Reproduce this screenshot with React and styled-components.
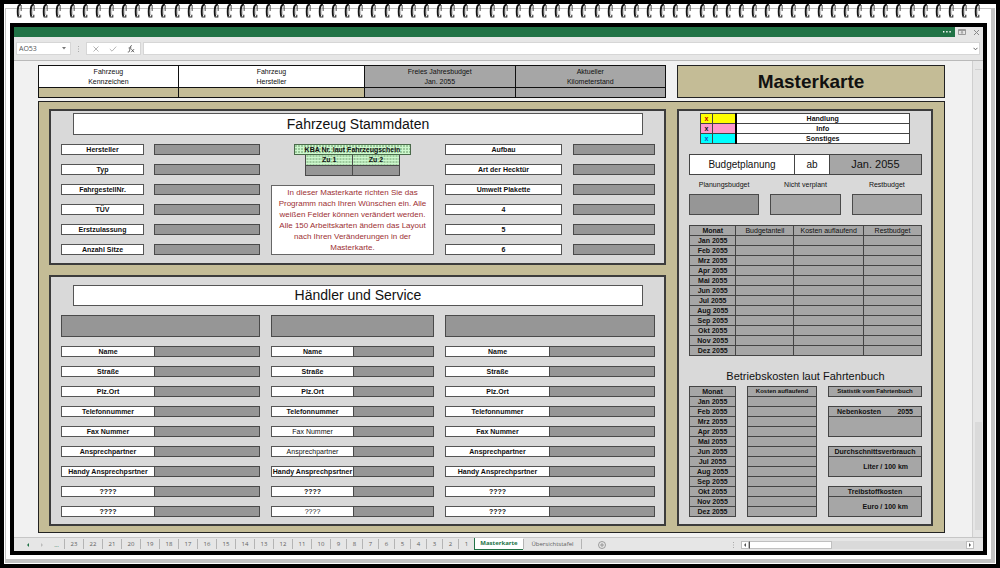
import React from "react";
import styled, { createGlobalStyle, css } from "styled-components";

const color = {
  sand: "#c4bc96",
  panel: "#d9d9d9",
  dark: "#969696",
  mid: "#a6a6a6",
  line: "#4a4a4a",
  green: "#217346",
  chrome: "#e6e6e6",
};

const GlobalStyle = createGlobalStyle`
  *, *::before, *::after { box-sizing: border-box; }
  body {
    margin: 0;
    background: #000;
    color: #111;
    font: 7px/9px "Liberation Sans", Arial, sans-serif;
  }
  button, input, select { font: inherit; color: inherit; margin: 0; border-radius: 0; }
  table { border-collapse: collapse; border-spacing: 0; table-layout: fixed; width: 100%; }
  h1, h2, h3, p { margin: 0; font-size: inherit; font-weight: normal; }
`;

/* ---------- spiral notebook ---------- */

const Paper = styled.div`
  margin: 4px;
  padding: 4px 1px 1px;
  background: #fff;
`;

const PaperEdge = styled.div`
  border: solid #c3c3c3;
  border-width: 1px 4px 4px 1px;
`;

const Spiral = styled.div`
  display: flex;
  justify-content: space-between;
  position: relative;
  height: 14px;
  margin-top: -5px;
  padding: 0 10px;
`;

const RingSvg = styled.svg`
  flex: none;
  width: 6px;
  height: 14px;
`;

const Ring = () => (
  <RingSvg viewBox="0 0 6 14" aria-hidden="true">
    <path d="M4.8 1C2.6 .4 2 2.6 1.8 5.5C1.6 9 1.6 11.2 2.4 12.6" fill="none" stroke="#151515" strokeWidth="1.9" />
    <path d="M4.6 2.8C3.7 3 3.5 6 3.6 11" fill="none" stroke="#b5b5b5" strokeWidth=".8" />
    <path d="M5.2 1V7" fill="none" stroke="#444" strokeWidth=".9" />
    <path d="M1.6 13H4.8V10.8" fill="none" stroke="#333" strokeWidth="1.1" />
  </RingSvg>
);

const Frame = styled.div`
  margin: 5px 4px 4px;
  border: 4px solid #000;
  background: ${color.chrome};
`;

/* ---------- spreadsheet window ---------- */

const TitleBar = styled.header`
  display: flex;
  height: 10px;
`;

const TitleFill = styled.div`
  flex: 1;
  display: flex;
  justify-content: flex-end;
  padding-right: 3px;
  background: ${color.green};
`;

const IconButton = styled.button`
  display: flex;
  align-items: center;
  justify-content: center;
  width: ${(p) => p.$w || 14}px;
  padding: 0;
  border: 0;
  background: none;
  color: ${(p) => p.$tone || "#888"};
`;

const FormulaBar = styled.div`
  display: flex;
  align-items: center;
  height: 24px;
  padding: 0 3px 0 2px;
  border-bottom: 1px solid #b9b9b9;
`;

const NameBox = styled.div`
  display: flex;
  align-items: center;
  width: 55px;
  height: 13px;
  padding-right: 4px;
  border: 1px solid #d6d6d6;
  background: #fff;
`;

const NameSelect = styled.select`
  flex: 1;
  min-width: 0;
  height: 11px;
  padding: 0 2px;
  border: 0;
  appearance: none;
  background: transparent;
  color: #555;
  font-family: "Open Sans", "Noto Sans", sans-serif;
`;

const Grip = styled.svg`
  width: 15px;
  height: 8px;
`;

const FormulaTools = styled.div`
  display: flex;
  justify-content: space-around;
  width: 55px;
  height: 13px;
  margin-right: 2px;
  border: 1px solid #d6d6d6;
  background: #fff;
`;

const FormulaField = styled.div`
  flex: 1;
  display: flex;
  height: 13px;
  border: 1px solid #d6d6d6;
  background: #fff;
`;

const FormulaInput = styled.input`
  flex: 1;
  min-width: 0;
  padding: 0 4px;
  border: 0;
  background: transparent;
`;

const Workspace = styled.div`
  display: flex;
`;

const Sheet = styled.main`
  flex: 1;
  min-width: 0;
  padding: 4px 27px 4px 24px;
  background: #f1f1f1;
`;

const VerticalScroll = styled.div`
  display: flex;
  flex-direction: column;
  justify-content: space-between;
  width: 11px;
  padding: 8px 1px 7px 2px;
  border-left: 1px solid #cfcfcf;
`;

const ScrollTop = styled.div`
  height: 1px;
  background: #d2d2d2;
`;

const ScrollThumb = styled.div`
  height: 108px;
  background: #dadada;
`;

/* ---------- card header ---------- */

const HeaderRow = styled.div`
  display: grid;
  grid-template-columns: minmax(0, 628fr) minmax(0, 268fr);
  gap: 11px;
  margin-bottom: 3px;
`;

const Col = styled.col`
  width: ${(p) => p.$w};
`;

const InfoTable = styled.table`
  text-align: center;
  th, td {
    padding: 0;
    border: 1px solid #111;
  }
  th {
    height: 21px;
    padding-top: 1px;
    font-weight: normal;
    line-height: 10px;
    background: ${color.mid};
  }
  td { height: 10px; background: ${color.mid}; }
  th:nth-child(-n + 2) { background: #fff; }
  td:nth-child(-n + 2) { background: ${color.sand}; }
`;

const CardTitle = styled.h1`
  display: flex;
  align-items: center;
  justify-content: center;
  border: 1px solid #222;
  background: ${color.sand};
  font-size: 19px;
  line-height: 22px;
  font-weight: bold;
`;

/* ---------- board and panels ---------- */

const Board = styled.div`
  display: grid;
  grid-template-columns: minmax(0, 617fr) minmax(0, 256fr);
  gap: 11px;
  padding: 7px 11px 6px 10px;
  border: 1px solid #222;
  background: ${color.sand};
`;

const BoardColumn = styled.div`
  display: flex;
  flex-direction: column;
  gap: 10px;
`;

const Panel = styled.section`
  padding: ${(p) => p.$top || 2}px 9px ${(p) => p.$bottom || 7}px 10px;
  border: 2px solid #3c3c3c;
  background: ${color.panel};
`;

const PanelTitle = styled.h2`
  margin: 0 12px 9px;
  border: 1px solid #555;
  background: #fff;
  font-size: 14px;
  line-height: ${(p) => p.$line || 20}px;
  text-align: center;
`;

const ThreeColumns = styled.div`
  display: grid;
  grid-template-columns: minmax(0, 199fr) minmax(0, 163fr) minmax(0, 210fr);
  gap: 11px;
`;

const FieldList = styled.div`
  display: flex;
  flex-direction: column;
  gap: 9px;
`;

const FieldRow = styled.div`
  display: grid;
  grid-template-columns: minmax(0, ${(p) => p.$cols[0]}fr) minmax(0, ${(p) => p.$cols[1]}fr);
  gap: ${(p) => p.$gap}px;
`;

const FieldLabel = styled.label`
  height: 11px;
  border: 1px solid #555;
  ${(p) => p.$joined && css`border-right: 0;`}
  background: #fff;
  font-weight: ${(p) => (p.$plain ? "normal" : "bold")};
  text-align: center;
  white-space: nowrap;
`;

const FieldInput = styled.input`
  width: 100%;
  height: ${(p) => p.$h || 11}px;
  padding: 0 3px;
  border: 1px solid ${color.line};
  background: ${(p) => (p.$light ? color.mid : color.dark)};
`;

const Field = ({ id, label, cols, gap = 0, plain }) => (
  <FieldRow $cols={cols} $gap={gap}>
    <FieldLabel htmlFor={id} $joined={gap === 0} $plain={plain}>{label}</FieldLabel>
    <FieldInput id={id} />
  </FieldRow>
);

const CenterColumn = styled.div`
  display: flex;
  flex-direction: column;
  align-items: center;
`;

const dotted = css`
  background-color: #cdf8cd;
  background-image: radial-gradient(circle at 1px 1px, #9cc99c 1px, transparent 1px);
  background-size: 3px 3px;
`;

const KbaTitle = styled.h3`
  width: 72%;
  border: 1px solid #4a6a4a;
  ${dotted}
  font-weight: bold;
  text-align: center;
  white-space: nowrap;
`;

const KbaTable = styled.table`
  width: 58%;
  margin-bottom: 9px;
  th, td {
    height: 10px;
    padding: 0;
    border: 1px solid #4a4a4a;
    line-height: 9px;
  }
  th { ${dotted} border-top: 0; }
  td { background: ${color.dark}; }
`;

const Notice = styled.p`
  flex: 1;
  align-self: stretch;
  display: flex;
  align-items: center;
  justify-content: center;
  border: 1px solid #666;
  background: #fff;
  color: #9c3034;
  font-size: 8px;
  line-height: 11px;
  text-align: center;
  white-space: nowrap;
`;

/* ---------- budget panel ---------- */

const Legend = styled.table`
  width: auto;
  margin: 0 11px 10px;
  min-width: calc(100% - 23px);
  th, td {
    height: 10px;
    padding: 0;
    border: 1px solid #444;
    line-height: 9px;
    font-weight: bold;
    text-align: center;
  }
  td:last-child { border-left: 2px solid #000; background: #fff; }
`;

const Swatch = styled.td`
  background: ${(p) => p.$fill};
  color: ${(p) => p.$ink};
`;

const PlanRow = styled.div`
  display: grid;
  grid-template-columns: minmax(0, 105fr) minmax(0, 35fr) minmax(0, 93fr);
  border: 1px solid #444;
  background: #fff;
  font-size: 10px;
  line-height: 19px;
  text-align: center;
`;

const PlanCell = styled.div`
  & + & { border-left: 1px solid #444; }
  ${(p) => p.$month && css`background: ${color.mid}; font-size: 11px;`}
`;

const BudgetBoxes = styled.div`
  display: grid;
  grid-template-columns: repeat(3, minmax(0, 1fr));
  gap: 11px;
  margin-bottom: 10px;
  text-align: center;
`;

const BoxLabel = styled.label`
  display: block;
  line-height: 19px;
`;

const MonthTable = styled.table`
  background: ${color.mid};
  text-align: center;
  th, td {
    height: 10px;
    padding: 0;
    border: 1px solid #444;
    line-height: 9px;
    white-space: nowrap;
  }
  thead th { font-weight: ${(p) => (p.$small ? "bold" : "normal")}; }
  thead th:first-child { font-weight: bold; }
  ${(p) => p.$small && css`font-size: 6px;`}
`;

const CostTitle = styled.h2`
  padding-top: 10px;
  font-size: 11px;
  line-height: 20px;
  text-align: center;
`;

const CostColumns = styled.div`
  display: grid;
  grid-template-columns: minmax(0, 47fr) minmax(0, 70fr) minmax(0, 94fr);
  gap: 11px;
`;

const StatColumn = styled.div`
  display: flex;
  flex-direction: column;
  gap: 9px;
  font-weight: bold;
`;

const StatHeading = styled.h3`
  border: 1px solid #444;
  background: ${color.mid};
  font-size: 6px;
  font-weight: bold;
  text-align: center;
  white-space: nowrap;
`;

const StatCard = styled.div`
  height: 31px;
  border: 1px solid #444;
  background: ${color.mid};
`;

const StatHead = styled.div`
  display: flex;
  justify-content: ${(p) => (p.$split ? "space-between" : "center")};
  height: 10px;
  padding: 0 ${(p) => (p.$split ? 8 : 0)}px;
  border-bottom: 1px solid #444;
`;

const StatUnit = styled.div`
  padding-right: 13px;
  line-height: 20px;
  text-align: right;
`;

/* ---------- sheet tabs ---------- */

const TabBar = styled.nav`
  display: flex;
  align-items: stretch;
  height: 14px;
  padding: 0 9px 0 7px;
  border-top: 1px solid #c6c6c6;
  color: #606060;
  font: 6px/12px "Open Sans", "Noto Sans", sans-serif;
`;

const Tab = styled.button`
  width: ${(p) => p.$w}px;
  margin: 1px 0 2px;
  padding: 0;
  border: 0;
  border-left: 1px solid #b4b4b4;
  background: none;
  line-height: 10px;
  ${(p) => p.$last && css`border-right: 1px solid #b4b4b4;`}
  ${(p) => p.$active && css`
    margin: 0 0 1px;
    border-left-color: ${color.green};
    border-bottom: 1px solid ${color.green};
    background: #fff;
    color: ${color.green};
    font-weight: bold;
    line-height: 11px;
  `}
`;

const HorizontalScroll = styled.div`
  display: flex;
  align-items: center;
  width: 26%;
  margin-left: auto;
`;

const ScrollButton = styled.button`
  display: flex;
  align-items: center;
  justify-content: center;
  width: 8px;
  height: 8px;
  padding: 0;
  border: 1px solid #bdbdbd;
  background: #fff;
`;

const ScrollTrack = styled.div`
  flex: 1;
  height: 8px;
  background: #dadada;
`;

const TrackThumb = styled.div`
  width: 38%;
  height: 8px;
  border: 1px solid #c0c0c0;
  border-left-color: #555;
  background: #fff;
`;

const Arrow = ({ left, fill = "#555" }) => (
  <svg width="4" height="4" viewBox="0 0 4 4" aria-hidden="true">
    <path d={left ? "M3 0V4L1 2Z" : "M1 0V4L3 2Z"} fill={fill} />
  </svg>
);

const GripDots = () => (
  <Grip viewBox="0 0 15 8" aria-hidden="true">
    <path d="M7 1h1v1H7zM7 3.5h1v1H7zM7 6h1v1H7z" fill="#aaa" />
  </Grip>
);

const master = ["Hersteller", "Typ", "FahrgestellNr.", "TÜV", "Erstzulassung", "Anzahl Sitze"];
const extras = ["Aufbau", "Art der Hecktür", "Umwelt Plakette", "4", "5", "6"];
const contact = ["Name", "Straße", "Plz.Ort", "Telefonnummer", "Fax Nummer", "Ansprechpartner", "Handy Ansprechpsrtner", "????", "????"];
const services = [
  { cols: [93, 106], plain: [] },
  { cols: [82, 81], plain: [4, 5, 8] },
  { cols: [104, 106], plain: [] },
];
const months = ["Jan", "Feb", "Mrz", "Apr", "Mai", "Jun", "Jul", "Aug", "Sep", "Okt", "Nov", "Dez"].map((m) => `${m} 2055`);
const legend = [
  ["Handlung", "#ffff00", "#c00000"],
  ["Info", "#ff99cc", "#111111"],
  ["Sonstiges", "#00ffff", "#1f4fbf"],
];
const sheetNumbers = Array.from({ length: 23 }, (_, i) => 23 - i);

export default function App() {
  return (
    <>
      <GlobalStyle />
      <Paper>
        <PaperEdge>
          <Spiral>{Array.from({ length: 74 }, (_, i) => <Ring key={i} />)}</Spiral>
          <Frame>
            <TitleBar>
              <TitleFill>
                <IconButton $w={10} $tone="#fff" aria-label="Mehr">
                  <svg width="8" height="2" viewBox="0 0 8 2">
                    <path d="M0 0h1.4v1.4H0zM3.2 0h1.4v1.4H3.2zM6.4 0h1.4v1.4H6.4z" fill="currentColor" />
                  </svg>
                </IconButton>
              </TitleFill>
              <IconButton aria-label="Menüband-Anzeigeoptionen">
                <svg width="8" height="6" viewBox="0 0 8 6" fill="none" stroke="currentColor">
                  <path d="M.5 .5h7v5h-7zM.5 1.5h7M4 5V2.6M2.8 3.6L4 2.5L5.2 3.6" strokeWidth=".8" />
                </svg>
              </IconButton>
              <IconButton aria-label="Schließen">
                <svg width="7" height="7" viewBox="0 0 7 7" fill="none" stroke="currentColor">
                  <path d="M1 1l5 5M6 1L1 6" />
                </svg>
              </IconButton>
            </TitleBar>

            <FormulaBar>
              <NameBox>
                <NameSelect aria-label="Namenfeld" defaultValue="AO53">
                  <option>AO53</option>
                </NameSelect>
                <svg width="4" height="3" viewBox="0 0 4 3" aria-hidden="true"><path d="M0 0h4L2 2.5Z" fill="#777" /></svg>
              </NameBox>
              <GripDots />
              <FormulaTools>
                <IconButton $tone="#b5b5b5" aria-label="Abbrechen">
                  <svg width="6" height="6" viewBox="0 0 6 6" fill="none" stroke="currentColor"><path d="M.5 .5l5 5M5.5 .5l-5 5" /></svg>
                </IconButton>
                <IconButton $tone="#b5b5b5" aria-label="Eingeben">
                  <svg width="8" height="6" viewBox="0 0 8 6" fill="none" stroke="currentColor"><path d="M.8 3L3 5.2L7.2 .6" /></svg>
                </IconButton>
                <IconButton $tone="#555" aria-label="Funktion einfügen">
                  <svg width="8" height="8" viewBox="0 0 8 8" fill="none" stroke="currentColor" strokeWidth=".9">
                    <path d="M5 .8C3.6 .2 3.3 1.6 3 3.4C2.6 6 2.4 7.6 .8 7M1.6 3H4.4M4.4 4.2L7 7.2M7 4.2L4.2 7.2" />
                  </svg>
                </IconButton>
              </FormulaTools>
              <FormulaField>
                <FormulaInput aria-label="Bearbeitungsleiste" />
                <IconButton $w={8} $tone="#666" aria-label="Bearbeitungsleiste erweitern">
                  <svg width="5" height="4" viewBox="0 0 5 4" fill="none" stroke="currentColor"><path d="M.5 .8l2 2l2-2" /></svg>
                </IconButton>
              </FormulaField>
            </FormulaBar>

            <Workspace>
              <Sheet>
                <HeaderRow>
                  <InfoTable>
                    <colgroup>
                      <Col $w="22.3%" /><Col $w="29.7%" /><Col $w="24%" /><Col $w="24%" />
                    </colgroup>
                    <thead>
                      <tr>
                        <th>Fahrzeug<br />Kennzeichen</th>
                        <th>Fahrzeug<br />Hersteller</th>
                        <th>Freies Jahresbudget<br />Jan. 2055</th>
                        <th>Aktueller<br />Kilometerstand</th>
                      </tr>
                    </thead>
                    <tbody><tr><td /><td /><td /><td /></tr></tbody>
                  </InfoTable>
                  <CardTitle>Masterkarte</CardTitle>
                </HeaderRow>

                <Board>
                  <BoardColumn>
                    <Panel $bottom={8}>
                      <PanelTitle>Fahrzeug Stammdaten</PanelTitle>
                      <ThreeColumns>
                        <FieldList>
                          {master.map((l, i) => <Field key={l} id={`m${i}`} label={l} cols={[83, 106]} gap={10} />)}
                        </FieldList>
                        <CenterColumn>
                          <KbaTitle>KBA Nr. laut Fahrzeugschein</KbaTitle>
                          <KbaTable>
                            <thead><tr><th>Zu 1</th><th>Zu 2</th></tr></thead>
                            <tbody><tr><td /><td /></tr></tbody>
                          </KbaTable>
                          <Notice>
                            In dieser Masterkarte richten Sie das<br />
                            Programm nach Ihren Wünschen ein. Alle<br />
                            weißen Felder können verändert werden.<br />
                            Alle 150 Arbeitskarten ändern das Layout<br />
                            nach Ihren Veränderungen in der<br />
                            Masterkarte.
                          </Notice>
                        </CenterColumn>
                        <FieldList>
                          {extras.map((l, i) => <Field key={l} id={`e${i}`} label={l} cols={[117, 82]} gap={11} />)}
                        </FieldList>
                      </ThreeColumns>
                    </Panel>

                    <Panel $top={8}>
                      <PanelTitle $line={19}>Händler und Service</PanelTitle>
                      <ThreeColumns>
                        {services.map((s, n) => (
                          <FieldList key={n}>
                            <FieldInput $h={22} aria-label={`Händler ${n + 1}`} />
                            {contact.map((l, i) => (
                              <Field key={i} id={`s${n}-${i}`} label={l} cols={s.cols} plain={s.plain.includes(i)} />
                            ))}
                          </FieldList>
                        ))}
                      </ThreeColumns>
                    </Panel>
                  </BoardColumn>

                  <Panel>
                    <Legend>
                      <colgroup>
                        <Col $w="12px" /><Col $w="23px" /><col />
                      </colgroup>
                      <tbody>
                        {legend.map(([name, fill, ink]) => (
                          <tr key={name}>
                            <Swatch $fill={fill} $ink={ink}>x</Swatch>
                            <Swatch $fill={fill} />
                            <td>{name}</td>
                          </tr>
                        ))}
                      </tbody>
                    </Legend>
                    <PlanRow>
                      <PlanCell>Budgetplanung</PlanCell>
                      <PlanCell>ab</PlanCell>
                      <PlanCell $month>Jan. 2055</PlanCell>
                    </PlanRow>
                    <BudgetBoxes>
                      {["Planungsbudget", "Nicht verplant", "Restbudget"].map((l, i) => (
                        <div key={l}>
                          <BoxLabel htmlFor={`b${i}`}>{l}</BoxLabel>
                          <FieldInput id={`b${i}`} $h={21} $light={i > 0} />
                        </div>
                      ))}
                    </BudgetBoxes>
                    <MonthTable>
                      <colgroup>
                        <Col $w="20%" /><Col $w="25%" /><Col $w="30%" /><Col $w="25%" />
                      </colgroup>
                      <thead>
                        <tr><th>Monat</th><th>Budgetanteil</th><th>Kosten auflaufend</th><th>Restbudget</th></tr>
                      </thead>
                      <tbody>
                        {months.map((m) => <tr key={m}><th>{m}</th><td /><td /><td /></tr>)}
                      </tbody>
                    </MonthTable>
                    <CostTitle>Betriebskosten laut Fahrtenbuch</CostTitle>
                    <CostColumns>
                      <MonthTable>
                        <thead><tr><th>Monat</th></tr></thead>
                        <tbody>{months.map((m) => <tr key={m}><th>{m}</th></tr>)}</tbody>
                      </MonthTable>
                      <MonthTable $small>
                        <thead><tr><th>Kosten auflaufend</th></tr></thead>
                        <tbody>{months.map((m) => <tr key={m}><td /></tr>)}</tbody>
                      </MonthTable>
                      <StatColumn>
                        <StatHeading>Statistik vom Fahrtenbuch</StatHeading>
                        <StatCard>
                          <StatHead $split><span>Nebenkosten</span><span>2055</span></StatHead>
                        </StatCard>
                        <StatCard>
                          <StatHead>Durchschnittsverbrauch</StatHead>
                          <StatUnit>Liter / 100 km</StatUnit>
                        </StatCard>
                        <StatCard>
                          <StatHead>Treibstoffkosten</StatHead>
                          <StatUnit>Euro / 100 km</StatUnit>
                        </StatCard>
                      </StatColumn>
                    </CostColumns>
                  </Panel>
                </Board>
              </Sheet>
              <VerticalScroll><ScrollTop /><ScrollThumb /></VerticalScroll>
            </Workspace>

            <TabBar>
              <IconButton aria-label="Zurück"><Arrow left fill={color.green} /></IconButton>
              <IconButton aria-label="Weiter"><Arrow fill="#bbb" /></IconButton>
              <IconButton $w={15} $tone={color.green} aria-label="Weitere Blätter">...</IconButton>
              {sheetNumbers.map((n) => <Tab key={n} $w={n > 9 ? 19 : 16}>{n}</Tab>)}
              <Tab $w={49} $active>Masterkarte</Tab>
              <Tab $w={59} $last>Übersichtstafel</Tab>
              <IconButton $w={40} aria-label="Neues Blatt">
                <svg width="8" height="8" viewBox="0 0 8 8" fill="none" stroke="currentColor" strokeWidth=".8">
                  <circle cx="4" cy="4" r="3.5" /><path d="M4 2v4M2 4h4" />
                </svg>
              </IconButton>
              <HorizontalScroll>
                <GripDots />
                <ScrollButton aria-label="Nach links"><Arrow left /></ScrollButton>
                <ScrollTrack><TrackThumb /></ScrollTrack>
                <ScrollButton aria-label="Nach rechts"><Arrow /></ScrollButton>
              </HorizontalScroll>
            </TabBar>
          </Frame>
        </PaperEdge>
      </Paper>
    </>
  );
}
